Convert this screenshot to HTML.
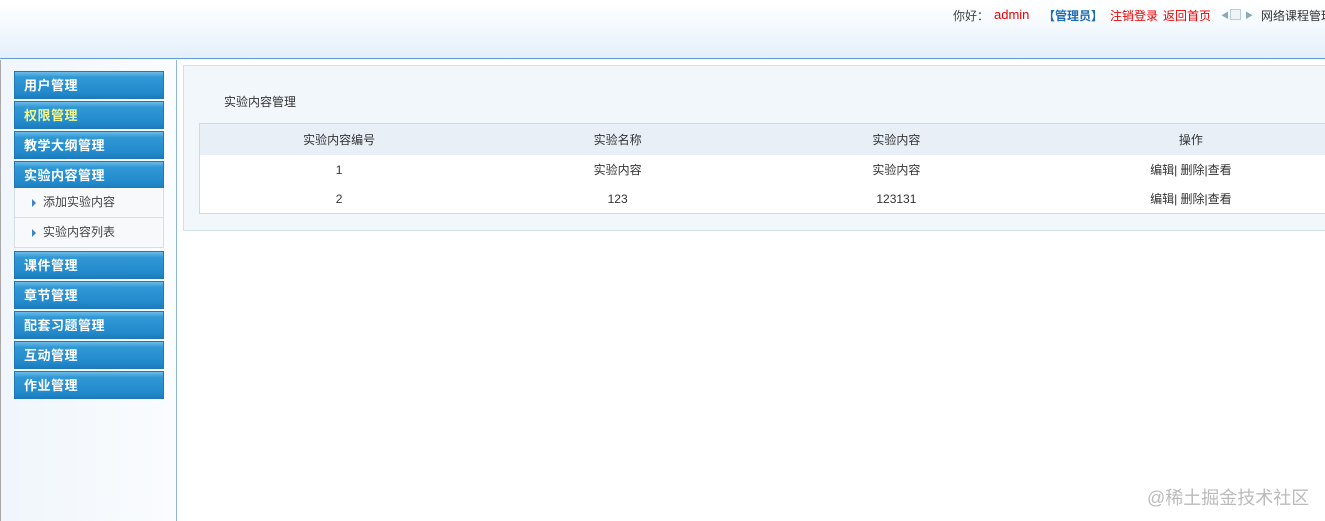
<!DOCTYPE html>
<html><head><meta charset="utf-8"><style>
*{margin:0;padding:0;box-sizing:border-box}
body{width:1325px;height:521px;overflow:hidden;background:#fff;font-family:"Liberation Sans","Noto Sans CJK SC",sans-serif;font-size:12px;color:#333;position:relative}
#hd{position:absolute;left:0;top:0;width:1325px;height:59px;background:linear-gradient(#fff 0%,#f7fbfe 35%,#e3effa 100%);border-bottom:1px solid #5f9ccb}
#top{position:absolute;top:7px;left:953px;white-space:nowrap;font-size:12px;color:#444}
#top span{position:absolute;top:0}
#sb{position:absolute;left:0;top:60px;width:177px;height:461px;background:linear-gradient(90deg,#f0f6fc,#fafcfe);border-right:1px solid #8cb6dc;border-left:1px solid #aaa}
.m{position:absolute;left:14px;width:150px;height:28px;background:linear-gradient(#6bbbe8 0%,#3198d6 20%,#2289cb 80%,#1a7cbd 100%);border:1px solid #2178b8;color:#fff;font-weight:bold;font-size:13px;line-height:28px;padding-left:9px;letter-spacing:0.5px}
.s{position:absolute;left:14px;width:150px;height:30px;background:#f7f9fb;border:1px solid #d6dde5;border-top:none;line-height:29px;padding-left:28px;color:#444;font-size:12px}
.s:before{content:"";position:absolute;left:17px;top:11px;border-left:4px solid #3b84c4;border-top:4px solid transparent;border-bottom:4px solid transparent}
#pn{position:absolute;left:183px;top:65px;width:1160px;height:166px;background:#f2f7fc;border:1px solid #d2e1ee}
#tt{position:absolute;left:40px;top:27px;font-size:12px}
table{position:absolute;left:15px;top:57px;width:1148px;border:1px solid #c8dced;border-collapse:collapse;background:#fff}
td{text-align:center;height:30px;font-size:12px;color:#333;width:279px}
tr.h td{background:#e8eff7;height:31px}
tr.l td{height:29px}
#wm{position:absolute;left:1147px;top:484px;font-size:18px;color:#bbb}
</style></head><body>
<div id="hd">
<div id="top">
<span style="left:0">你好：</span>
<span style="left:41px;color:#e00;font-size:13px;top:0">admin</span>
<span style="left:90px;color:#1f6cb0;font-weight:bold">【管理员】</span>
<span style="left:157px;color:#e00">注销登录</span>
<span style="left:210px;color:#e00">返回首页</span>
<span style="left:268px;color:#8ab;font-size:8px;top:3px">◀</span>
<span style="left:277px;top:2px;width:11px;height:11px;border:1px solid #bcd;background:#eef3f8"></span>
<span style="left:292px;color:#8ab;font-size:8px;top:3px">▶</span>
<span style="left:308px;color:#333">网络课程管理</span>
</div>
</div>
<div id="sb"></div>
<div class="m" style="top:71px">用户管理</div>
<div class="m" style="top:101px;color:#f0f890">权限管理</div>
<div class="m" style="top:131px">教学大纲管理</div>
<div class="m" style="top:161px">实验内容管理</div>
<div class="s" style="top:188px">添加实验内容</div>
<div class="s" style="top:218px">实验内容列表</div>
<div class="m" style="top:251px">课件管理</div>
<div class="m" style="top:281px">章节管理</div>
<div class="m" style="top:311px">配套习题管理</div>
<div class="m" style="top:341px">互动管理</div>
<div class="m" style="top:371px">作业管理</div>
<div id="pn">
<div id="tt">实验内容管理</div>
<table>
<tr class="h"><td>实验内容编号</td><td>实验名称</td><td>实验内容</td><td style="width:311px">操作</td></tr>
<tr><td>1</td><td>实验内容</td><td>实验内容</td><td>编辑| 删除|查看</td></tr>
<tr class="l"><td>2</td><td>123</td><td>123131</td><td>编辑| 删除|查看</td></tr>
</table>
</div>
<div id="wm">@稀土掘金技术社区</div>
</body></html>
